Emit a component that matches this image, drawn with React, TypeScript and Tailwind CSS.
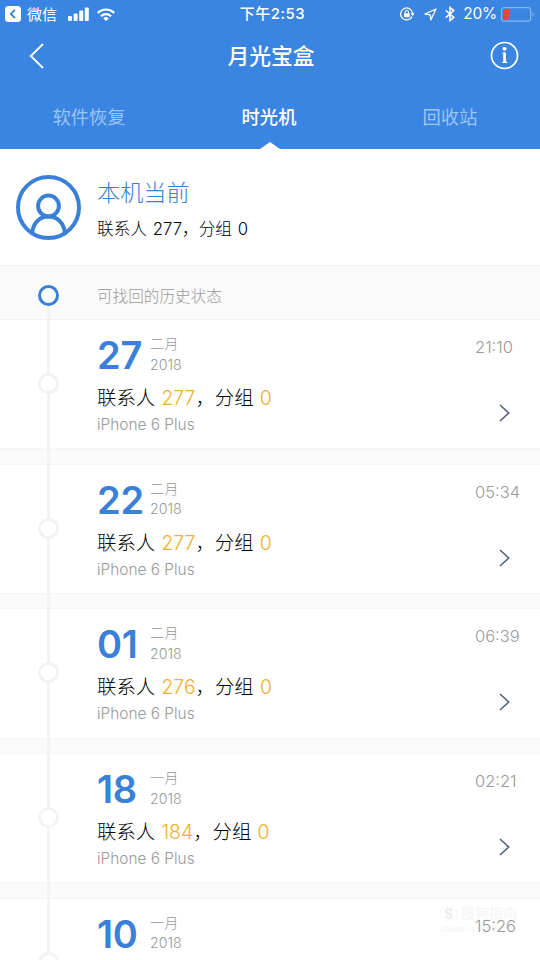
import { clsx } from "clsx";

interface Snapshot {
    day: string;
    month: string;
    time: string;
    contacts: number;
}

const snapshots: Snapshot[] = [
    { day: "27", month: "二月", time: "21:10", contacts: 277 },
    { day: "22", month: "二月", time: "05:34", contacts: 277 },
    { day: "01", month: "二月", time: "06:39", contacts: 276 },
    { day: "18", month: "一月", time: "02:21", contacts: 184 },
];

const oldest = { day: "10", month: "一月", time: "15:26" };

function StatusBar() {
    return (
        <div className="relative flex h-7 items-center justify-between pl-[5px] pr-[5px] text-[15px]">
            <div className="flex items-center">
                <svg width="16" height="16" viewBox="0 0 16 16">
                    <rect width="16" height="16" rx="3.5" fill="#fff" />
                    <path d="M10 3.8 5.8 8l4.2 4.2" fill="none" stroke="#3a84e2" strokeWidth="1.9" />
                </svg>
                <span className="ml-[6px] pt-px leading-7">微信</span>
                <svg className="ml-[11px]" width="21" height="14" viewBox="0 0 21 14" fill="#fff">
                    <rect x="0" y="9" width="4" height="5" rx="1" />
                    <rect x="5.6" y="6.5" width="4" height="7.5" rx="1" />
                    <rect x="11.2" y="3.5" width="4" height="10.5" rx="1" />
                    <rect x="16.8" y="0.5" width="4" height="13.5" rx="1" />
                </svg>
                <svg className="ml-[8px]" width="18" height="13" viewBox="0 0 18 13" fill="none" stroke="#fff" strokeWidth="2.2">
                    <path d="M.8 4.9a11.6 11.6 0 0 1 16.4 0" />
                    <path d="M4 8.2a7.1 7.1 0 0 1 10 0" />
                    <path d="M6.3 10.4a3.8 3.8 0 0 1 5.4 0L9 13z" fill="#fff" stroke="none" />
                </svg>
            </div>
            <div className="absolute inset-x-0 top-0 pl-[5px] text-center font-medium leading-7 tracking-[0.5px]">下午2:53</div>
            <div className="flex items-center">
                <svg width="15" height="14" viewBox="0 0 15 14" fill="none" stroke="#fff" strokeWidth="1.3">
                    <path d="M12 9.6A6 6 0 1 1 12.6 6.4" />
                    <path d="M10.5 6.2h4.2l-2.1 2.8z" fill="#fff" stroke="none" />
                    <rect x="4.1" y="6.2" width="5.6" height="4" rx=".6" fill="#fff" stroke="none" />
                    <path d="M5.2 6.4V5.2a1.7 1.7 0 0 1 3.4 0v1.2" strokeWidth="1.1" />
                </svg>
                <svg className="ml-[9px]" width="13" height="13" viewBox="0 0 13 13" fill="none" stroke="#fff" strokeWidth="1.3" strokeLinejoin="round">
                    <path d="M12 1 1 6l5.2.8.6 5.2z" />
                </svg>
                <svg className="ml-[8px]" width="10" height="16" viewBox="0 0 10 16" fill="none" stroke="#fff" strokeWidth="1.5">
                    <path d="m.8 4.4 8 7L5 14.6V1.4l3.8 3.2-8 7" />
                </svg>
                <span className="ml-[8px] text-[15.5px] leading-7 tracking-[-0.2px]">20%</span>
                <svg className="ml-[4px]" width="34" height="15" viewBox="0 0 34 15">
                    <rect x=".6" y=".6" width="29" height="13.6" rx="2.5" fill="none" stroke="#83b5f2" strokeWidth="1.2" />
                    <rect x="2" y="2" width="6" height="10.8" rx="1" fill="#f0413c" />
                    <path d="M31.5 5v5c1.6-.6 1.6-4.4 0-5z" fill="#83b5f2" />
                </svg>
            </div>
        </div>
    );
}

function NavBar() {
    return (
        <div className="flex h-[56px] items-center justify-between pl-[29px] pr-[21px]">
            <svg width="16" height="26" viewBox="0 0 16 26" fill="none" stroke="#fff" strokeWidth="1.8">
                <path d="M14 1 1.8 13 14 25" />
            </svg>
            <h1 className="ml-[7px] text-[21.8px] font-medium leading-[56px]">月光宝盒</h1>
            <svg className="-mt-px" width="29" height="29" viewBox="0 0 29 29" fill="none" stroke="#fff">
                <circle cx="14.5" cy="14.5" r="13" strokeWidth="1.7" />
                <circle cx="14.5" cy="7.8" r="2" fill="#fff" stroke="none" />
                <path d="M12.4 12h2.8M12.2 21.4h5" strokeWidth="1.1" />
                <path d="M14.6 11.5v10.4" strokeWidth="2.8" />
            </svg>
        </div>
    );
}

function Tabs() {
    const tabs = ["软件恢复", "时光机", "回收站"];

    return (
        <div className="flex h-[65px]">
            {tabs.map((tab, index) => {
                const active = index === 1;
                return (
                    <div key={tab} className="relative flex-1 text-center text-[18.3px] leading-[67px]">
                        <span className={clsx(active ? "pr-[2px] font-medium" : "text-[#9cc5f5]", index === 0 && "pr-[2px]")}>{tab}</span>
                        {active && (
                            <svg className="absolute bottom-0 left-1/2 -translate-x-1/2" width="20" height="7" viewBox="0 0 20 7" fill="#fff">
                                <path d="M0 7 10 0l10 7z" />
                            </svg>
                        )}
                    </div>
                );
            })}
        </div>
    );
}

function CurrentDevice() {
    return (
        <section className="flex h-[116px] pl-[16px]">
            <svg className="mt-[26px]" width="65" height="65" viewBox="0 0 65 65" fill="none" stroke="#3a80d8" strokeWidth="4">
                <circle cx="32.5" cy="32.5" r="30.5" />
                <circle cx="32.5" cy="31" r="10.4" />
                <path d="M16 58.5C17 48 23.5 41.6 32.5 41.6S48 48 49 58.5" />
            </svg>
            <div className="ml-[16px] pt-[27px]">
                <h2 className="text-[23.2px] font-light leading-[34px] text-[#3a80d8]">本机当前</h2>
                <p className="mt-[7px] text-[16.7px] font-light leading-[24px] text-black [word-spacing:1px]">联系人 277，分组 0</p>
            </div>
        </section>
    );
}

function HistoryHeader() {
    return (
        <div className="relative flex h-[55px] items-center border-y border-[#f0f0f0] bg-[#fafafa] pl-[97px]">
            <div className="absolute left-[47px] top-[40px] bottom-[-1px] w-[3px] bg-[#f3f3f3]" />
            <div className="absolute left-[38px] top-[19px] size-[21px] rounded-full border-[3px] border-[#3a80d8] bg-white" />
            <p className="pt-[8px] text-[15.6px] font-light leading-6 text-[#999]">可找回的历史状态</p>
        </div>
    );
}

function DateLine({ day, month }: { day: string; month: string }) {
    return (
        <div className="flex h-[54px] pt-[12px]">
            <div className="w-[53px] text-[38px] font-semibold leading-[46px] tracking-[-0.3px] text-[#3a80d8]">{day}</div>
            <div className="pt-[2px] text-[14.2px] font-light leading-[20.5px] text-[#999]">
                <p>{month}</p>
                <p>2018</p>
            </div>
        </div>
    );
}

function SnapshotRow({ snapshot }: { snapshot: Snapshot }) {
    return (
        <div className="relative h-[144.7px]">
            <div className="flex h-[128.2px] justify-between pl-[97px] pr-[20px]">
                <div>
                    <DateLine day={snapshot.day} month={snapshot.month} />
                    <p className="mt-[10px] text-[19.4px] font-light leading-7 text-black [word-spacing:0.8px]">
                        联系人 <span className="text-[#eeb02e]">{snapshot.contacts}</span>，分组 <span className="text-[#eeb02e]">0</span>
                    </p>
                    <p className="mt-[3px] text-[15.4px] font-light leading-5 text-[#999]">iPhone 6 Plus</p>
                </div>
                <div className="w-[45px]">
                    <p className="mt-[15px] text-[16.5px] font-light leading-6 text-[#999]">{snapshot.time}</p>
                    <svg className="ml-[23px] mt-[45px]" width="14" height="18" viewBox="0 0 14 18" fill="none" stroke="#4f607f" strokeWidth="1.6">
                        <path d="m2 1 8.7 8L2 17" />
                    </svg>
                </div>
            </div>
            <div className="h-[16.5px] border-y border-[#f5f5f5] bg-[#fafafa]" />
            <div className="absolute inset-y-0 left-[47px] w-[3px] bg-[#f3f3f3]" />
            <div className="absolute left-[38px] top-[53px] size-[21px] rounded-full border-[3px] border-[#f3f3f3] bg-white" />
        </div>
    );
}

function OldestRow() {
    return (
        <div className="relative flex h-[62px] justify-between overflow-hidden pl-[97px] pr-[20px]">
            <DateLine day={oldest.day} month={oldest.month} />
            <p className="mt-[15px] w-[45px] text-[16.5px] font-light leading-6 text-[#999]">{oldest.time}</p>
            <div className="absolute inset-y-0 left-[47px] w-[3px] bg-[#f3f3f3]" />
            <div className="absolute left-[38px] top-[53px] size-[21px] rounded-full border-[3px] border-[#f3f3f3] bg-white" />
        </div>
    );
}

function Watermark() {
    return (
        <div className="absolute left-[440px] top-[903px] text-[#f4f4f4]">
            <div className="flex items-center gap-[4px]">
                <span className="flex size-[17px] items-center justify-center rounded-full border border-[#f8f8f8] text-[14px] font-bold text-[#ececec]">S</span>
                <span className="text-[14px] leading-[20px]">搜狗指南</span>
            </div>
            <p className="text-[9px] leading-[12px]">zhinan.sogou.com</p>
        </div>
    );
}

export default function App() {
    return (
        <div className="relative h-[960px] w-[540px] overflow-hidden bg-white font-['Inter','Noto_Sans_CJK_SC',sans-serif]">
            <header className="bg-[#3a84e2] text-white">
                <StatusBar />
                <NavBar />
                <Tabs />
            </header>
            <CurrentDevice />
            <HistoryHeader />
            <Watermark />
            {snapshots.map((snapshot) => (
                <SnapshotRow key={snapshot.day} snapshot={snapshot} />
            ))}
            <OldestRow />
        </div>
    );
}
